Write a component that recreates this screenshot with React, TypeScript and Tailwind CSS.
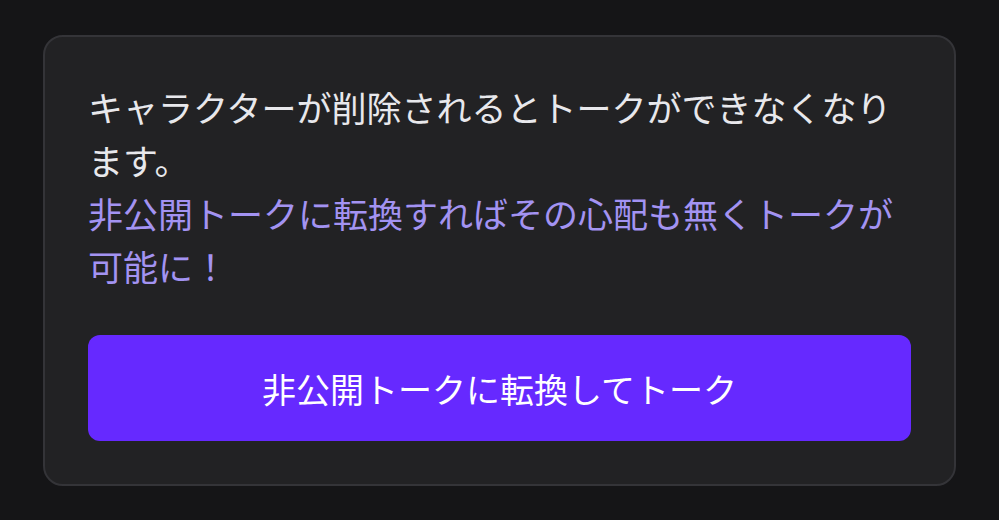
export default function App() {
  return (
    <div
      className="min-h-[520px] w-full bg-[#151517] px-[43px] pt-[35px]"
      style={{ fontFamily: '"Noto Sans CJK JP", "Noto Sans", sans-serif' }}
    >
      <div className="rounded-[20px] border-2 border-[#343438] bg-[#222224] p-[43px]">
        {/* message */}
        <div className="text-[35px] leading-[53px]">
          <p className="text-[#e8e8ec]">
            キャラクターが削除されるとトークができなくなります。
          </p>
          <p className="text-[#a393f2]">
            非公開トークに転換すればその心配も無くトークが可能に！
          </p>
        </div>

        <button className="mt-[43px] flex h-[106px] w-full items-center justify-center rounded-[12px] bg-[#6629ff] text-[34px] text-white">
          非公開トークに転換してトーク
        </button>
      </div>
    </div>
  );
}
